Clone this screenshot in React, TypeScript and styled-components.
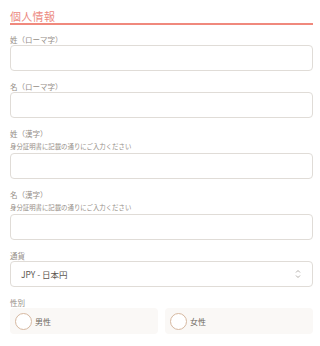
import styled, { createGlobalStyle } from 'styled-components';

const GlobalStyle = createGlobalStyle`
  html, body {
    margin: 0;
    padding: 0;
    background: #ffffff;
  }
  body {
    font-family: 'Noto Sans CJK JP', 'Noto Sans', sans-serif;
  }
`;

interface FieldDef {
  label: string;
  hint?: string;
}

const textFields: FieldDef[] = [
  { label: '姓（ローマ字）' },
  { label: '名（ローマ字）' },
  { label: '姓（漢字）', hint: '身分証明書に記載の通りにご入力ください' },
  { label: '名（漢字）', hint: '身分証明書に記載の通りにご入力ください' },
];

const genders = ['男性', '女性'];

function App() {
  return (
    <>
      <GlobalStyle />
      <Container>
        <Title>個人情報</Title>
        <Fields>
          {textFields.map((field) => (
            <Field key={field.label}>
              <Label>{field.label}</Label>
              {field.hint && <Hint>{field.hint}</Hint>}
              <Input type="text" />
            </Field>
          ))}
          <Field>
            <Label>通貨</Label>
            <Select>
              <span>JPY - 日本円</span>
              <svg width="6" height="10" viewBox="0 0 6 10" fill="none">
                <path d="M1 3.5 L3 1.5 L5 3.5" stroke="#a09a94" strokeWidth="0.8" />
                <path d="M1 6.5 L3 8.5 L5 6.5" stroke="#a09a94" strokeWidth="0.8" />
              </svg>
            </Select>
          </Field>
          <Field>
            <Label>性別</Label>
            <RadioRow>
              {genders.map((g) => (
                <RadioBox key={g}>
                  <Circle />
                  <RadioText>{g}</RadioText>
                </RadioBox>
              ))}
            </RadioRow>
          </Field>
        </Fields>
      </Container>
    </>
  );
}
export default App;

const Container = styled.div`
  padding: 10px 7px 0 10px;
`;

const Title = styled.h2`
  margin: 0 0 11px;
  padding-bottom: 1px;
  font-size: 11px;
  line-height: 12px;
  font-weight: 400;
  letter-spacing: 0.3px;
  color: #ec8a7f;
  border-bottom: 2px solid #f0897d;
`;

const Fields = styled.div`
  display: flex;
  flex-direction: column;
  gap: 12px;
`;

const Field = styled.div`
  display: flex;
  flex-direction: column;
`;

const Label = styled.div`
  font-size: 7.5px;
  line-height: 8px;
  color: #958e87;
  margin-bottom: 1px;
`;

const Hint = styled.div`
  font-size: 6.4px;
  line-height: 8px;
  color: #958e87;
  margin: 4px 0 2px;
`;

const Input = styled.input`
  box-sizing: border-box;
  width: 100%;
  height: 26px;
  border: 1px solid #e0dcd7;
  border-radius: 4px;
  background: #fff;
  outline: none;
  padding: 0 9px;
`;

const Select = styled.div`
  box-sizing: border-box;
  height: 26px;
  display: flex;
  align-items: center;
  justify-content: space-between;
  padding: 0 11px 0 10px;
  border: 1px solid #e0dcd7;
  border-radius: 4px;
  font-size: 8.5px;
  color: #5c5650;
`;

const RadioRow = styled.div`
  display: grid;
  grid-template-columns: 1fr 1fr;
  gap: 7px;
`;

const RadioBox = styled.div`
  height: 26px;
  display: flex;
  align-items: center;
  gap: 3px;
  padding-left: 5px;
  background: #faf8f6;
  border-radius: 4px;
`;

const Circle = styled.span`
  box-sizing: border-box;
  width: 17px;
  height: 17px;
  border-radius: 50%;
  border: 1px solid #d6b8a0;
  background: #fff;
`;

const RadioText = styled.span`
  font-size: 8px;
  color: #6e6862;
`;
